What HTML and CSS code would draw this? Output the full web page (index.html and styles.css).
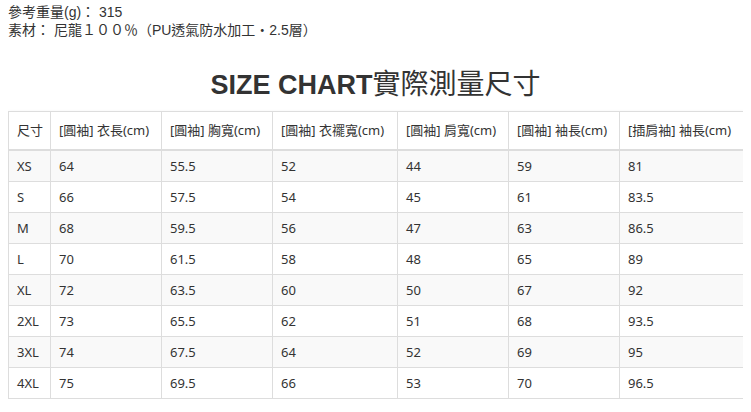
FILE: index.html
```html
<!DOCTYPE html>
<html lang="zh-Hant">
<head>
<meta charset="utf-8">
<title>Size chart</title>
<link rel="stylesheet" href="styles.css">
</head>
<body>
<div class="specs">
  <p class="spec">參考重量(g)： 315</p>
  <p class="spec">素材： 尼龍１００％（PU透氣防水加工‧2.5層）</p>
</div>
<h2 class="title">SIZE CHART<span class="title-cjk">實際測量尺寸</span></h2>
<table class="chart">
  <colgroup>
    <col class="c-size">
    <col class="c-n">
    <col class="c-n">
    <col class="c-w">
    <col class="c-n">
    <col class="c-n">
    <col class="c-w">
  </colgroup>
  <thead>
    <tr><th>尺寸</th><th>[圓袖] 衣長(cm)</th><th>[圓袖] 胸寬(cm)</th><th>[圓袖] 衣襬寬(cm)</th><th>[圓袖] 肩寬(cm)</th><th>[圓袖] 袖長(cm)</th><th>[插肩袖] 袖長(cm)</th></tr>
  </thead>
  <tbody>
    <tr><td>XS</td><td>64</td><td>55.5</td><td>52</td><td>44</td><td>59</td><td>81</td></tr>
    <tr><td>S</td><td>66</td><td>57.5</td><td>54</td><td>45</td><td>61</td><td>83.5</td></tr>
    <tr><td>M</td><td>68</td><td>59.5</td><td>56</td><td>47</td><td>63</td><td>86.5</td></tr>
    <tr><td>L</td><td>70</td><td>61.5</td><td>58</td><td>48</td><td>65</td><td>89</td></tr>
    <tr><td>XL</td><td>72</td><td>63.5</td><td>60</td><td>50</td><td>67</td><td>92</td></tr>
    <tr><td>2XL</td><td>73</td><td>65.5</td><td>62</td><td>51</td><td>68</td><td>93.5</td></tr>
    <tr><td>3XL</td><td>74</td><td>67.5</td><td>64</td><td>52</td><td>69</td><td>95</td></tr>
    <tr><td>4XL</td><td>75</td><td>69.5</td><td>66</td><td>53</td><td>70</td><td>96.5</td></tr>
  </tbody>
</table>
</body>
</html>
```
FILE: styles.css
```css
html, body {
  background: #ffffff;
}
body {
  margin: 3px 8px 8px 8px;
  color: #333333;
  font-family: "Liberation Sans", "Noto Sans CJK TC", sans-serif;
}
.specs {
  display: flex;
  flex-direction: column;
}
.spec {
  margin: 0;
  font-size: 14px;
  line-height: 18px;
  color: #333333;
}
.title {
  margin: 25px 0 0 0;
  height: 47px;
  text-align: center;
  font-size: 27px;
  line-height: 36px;
  font-weight: bold;
  color: #333333;
  font-family: "Liberation Sans", "Noto Sans CJK TC", sans-serif;
}
.title-cjk {
  font-weight: normal;
  font-size: 28px;
  font-family: "Noto Sans CJK TC", sans-serif;
}
.chart {
  width: 736px;
  table-layout: fixed;
  border-collapse: collapse;
  border: 1px solid #dddddd;
  box-shadow: 0 2px 4px rgba(0, 0, 0, 0.14);
  font-family: "Noto Sans", "Noto Sans CJK TC", sans-serif;
  font-size: 13px;
  color: #333333;
}
.c-size { width: 42px; }
.c-n { width: 111px; }
.c-w { width: 125px; }
.chart th,
.chart td {
  border: 1px solid #dddddd;
  text-align: left;
  vertical-align: middle;
  white-space: nowrap;
  padding: 6px 8px;
  line-height: 18px;
}
.chart th {
  font-weight: normal;
  padding: 10px 8px;
  line-height: 17px;
  border-bottom: 2px solid #dddddd;
  background: #ffffff;
}
.chart tbody tr:nth-child(odd) td {
  background: #f9f9f9;
}
.chart tbody tr:nth-child(even) td {
  background: #ffffff;
}
```
